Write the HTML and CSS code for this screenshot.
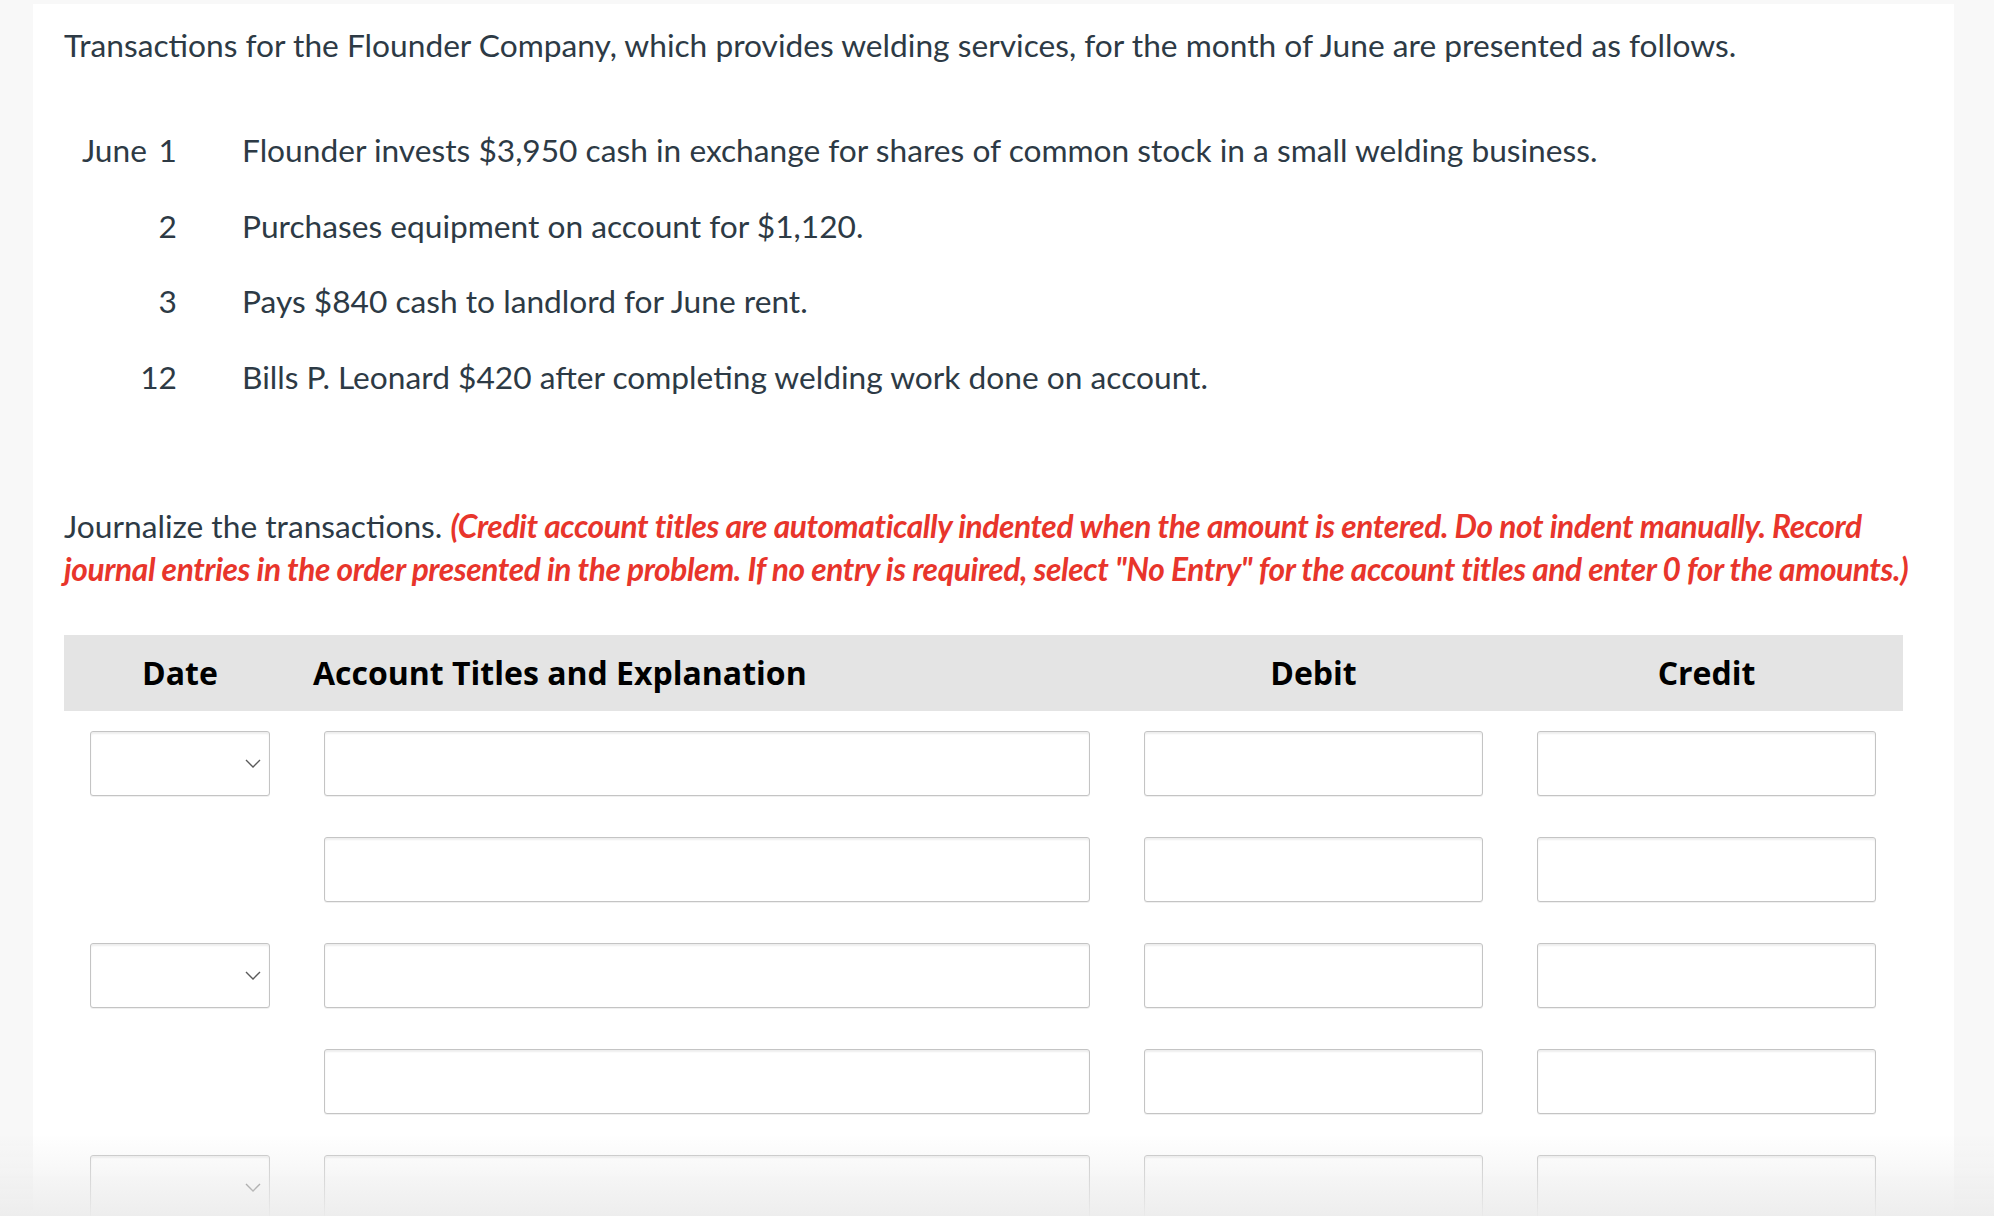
FILE: index.html
```html
<!DOCTYPE html>
<html lang="en">
<head>
<meta charset="utf-8">
<title>Journal entries</title>
<link rel="stylesheet" href="styles.css">
</head>
<body>
<main class="card">
  <p class="intro">Transactions for the Flounder Company, which provides welding services, for the month of June are presented as follows.</p>

  <div class="txns">
    <div class="txn-date">June 1</div>
    <div class="txn-desc">Flounder invests $3,950 cash in exchange for shares of common stock in a small welding business.</div>
    <div class="txn-date">2</div>
    <div class="txn-desc">Purchases equipment on account for $1,120.</div>
    <div class="txn-date">3</div>
    <div class="txn-desc">Pays $840 cash to landlord for June rent.</div>
    <div class="txn-date">12</div>
    <div class="txn-desc">Bills P. Leonard $420 after completing welding work done on account.</div>
  </div>

  <p class="instructions">Journalize the transactions. <em class="note">(Credit account titles are automatically indented when the amount is entered. Do not indent manually. Record journal entries in the order presented in the problem. If no entry is required, select "No Entry" for the account titles and enter 0 for the amounts.)</em></p>

  <div class="journal">
    <div class="journal-head">
      <div class="h-date">Date</div>
      <div class="h-account">Account Titles and Explanation</div>
      <div class="h-amount">Debit</div>
      <div class="h-amount">Credit</div>
    </div>

    <div class="journal-row">
      <div class="field select"><svg class="chev" viewBox="0 0 16 9" width="16" height="9"><path d="M1 1 L8 8 L15 1" fill="none" stroke="#5a5a5a" stroke-width="1.4"/></svg></div>
      <div class="field"></div>
      <div class="field"></div>
      <div class="field"></div>
    </div>
    <div class="journal-row">
      <div class="empty"></div>
      <div class="field"></div>
      <div class="field"></div>
      <div class="field"></div>
    </div>
    <div class="journal-row">
      <div class="field select"><svg class="chev" viewBox="0 0 16 9" width="16" height="9"><path d="M1 1 L8 8 L15 1" fill="none" stroke="#5a5a5a" stroke-width="1.4"/></svg></div>
      <div class="field"></div>
      <div class="field"></div>
      <div class="field"></div>
    </div>
    <div class="journal-row">
      <div class="empty"></div>
      <div class="field"></div>
      <div class="field"></div>
      <div class="field"></div>
    </div>
    <div class="journal-row">
      <div class="field select"><svg class="chev" viewBox="0 0 16 9" width="16" height="9"><path d="M1 1 L8 8 L15 1" fill="none" stroke="#5a5a5a" stroke-width="1.4"/></svg></div>
      <div class="field"></div>
      <div class="field"></div>
      <div class="field"></div>
    </div>
  </div>
</main>
<div class="fade"></div>
</body>
</html>
```

FILE: styles.css
```css
html, body {
  margin: 0;
  padding: 0;
  overflow: hidden;
}

body {
  background: #f8f8f8;
  font-family: "Lato", "Liberation Sans", sans-serif;
  color: #2d3a45;
  font-size: 31.7px;
  line-height: 44px;
}

.card {
  margin: 4px 0 0 33px;
  width: 1921px;
  box-sizing: border-box;
  background: #ffffff;
  padding: 18.5px 51px 40px 31px;
  min-height: 1300px;
}

.intro {
  margin: 0;
}

.txns {
  display: grid;
  grid-template-columns: 113px 1fr;
  column-gap: 65px;
  row-gap: 31.7px;
  margin-top: 61.5px;
}

.txn-date {
  text-align: right;
  white-space: nowrap;
  word-spacing: 3.6px;
}

.instructions {
  margin: 105.5px -30px 0 0;
  line-height: 43.5px;
}

.note {
  color: #e8352b;
  font-weight: 700;
  font-style: italic;
  letter-spacing: -0.4px;
}

.journal {
  margin-top: 43px;
}

.journal-head,
.journal-row {
  display: grid;
  grid-template-columns: 180px 766px 339px 339px;
  column-gap: 54px;
  padding: 0 27px 0 26px;
}

.journal-head {
  background: #e4e4e4;
  height: 76px;
  align-items: center;
  font-family: "Open Sans", "DejaVu Sans", sans-serif;
  font-weight: 700;
  font-size: 32px;
  line-height: 40px;
  color: #000000;
  margin-bottom: 20px;
}

.h-date,
.h-amount {
  text-align: center;
}

.h-account {
  margin-left: -11px;
}

.journal-row {
  margin-bottom: 41px;
}

.field {
  height: 65px;
  box-sizing: border-box;
  border: 1px solid #c4c4c4;
  border-radius: 3px;
  background: #ffffff;
  box-shadow: inset 0 2px 2px rgba(0, 0, 0, 0.07), 0 1px 0 rgba(0, 0, 0, 0.06);
}

.select {
  display: flex;
  align-items: center;
  justify-content: flex-end;
  padding-right: 8px;
}

.chev {
  display: block;
}

.fade {
  position: fixed;
  left: 0;
  right: 0;
  bottom: 0;
  height: 80px;
  background: linear-gradient(to bottom, rgba(236, 236, 236, 0), rgba(236, 236, 236, 0.95));
  pointer-events: none;
}
```
